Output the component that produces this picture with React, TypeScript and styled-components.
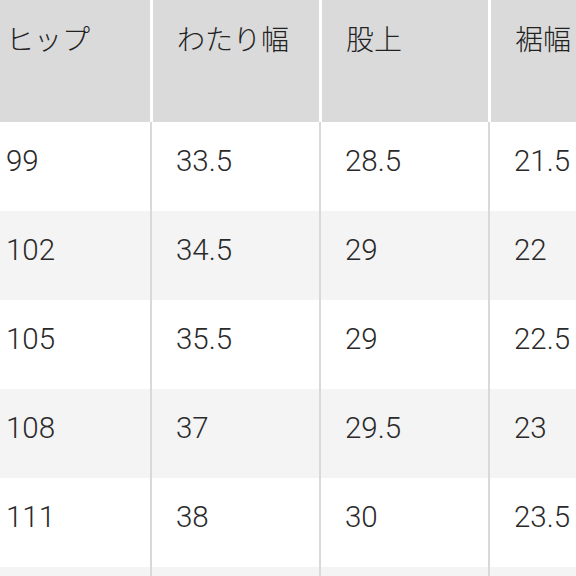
import React from 'react';
import styled, { createGlobalStyle } from 'styled-components';

const GlobalStyle = createGlobalStyle`
  html, body {
    margin: 0;
    padding: 0;
    background: #ffffff;
    overflow: hidden;
  }
  body {
    font-family: "Liberation Sans", Arial, "Noto Sans CJK JP", sans-serif;
    color: #222222;
  }
`;

const Viewport = styled.div`
  width: 576px;
  height: 576px;
  overflow: hidden;
  background: #f4f4f4;
`;

const Table = styled.div`
  margin-left: -17px;
  width: 680px;
  display: flex;
  flex-direction: column;
`;

const Row = styled.div<{ $shade: 'head' | 'white' | 'gray' }>`
  display: grid;
  grid-template-columns: 167px 169px 169px 175px;
  height: ${({ $shade }) => ($shade === 'head' ? '122px' : '89px')};
  background: ${({ $shade }) =>
    $shade === 'head' ? '#dadada' : $shade === 'gray' ? '#f4f4f4' : '#ffffff'};
`;

const Cell = styled.div<{ $head?: boolean; $first?: boolean }>`
  display: flex;
  align-items: ${({ $head }) => ($head ? 'flex-start' : 'center')};
  padding-left: ${({ $first }) => ($first ? '23px' : '24px')};
  padding-top: ${({ $head }) => ($head ? '23px' : '0')};
  padding-bottom: ${({ $head }) => ($head ? '0' : '11px')};
  border-left: ${({ $first, $head }) =>
    $first ? 'none' : $head ? '3px solid #ffffff' : '2px solid #d9d9d9'};
  font-size: ${({ $head }) => ($head ? '28px' : '29.5px')};
  font-family: ${({ $head }) =>
    $head
      ? '"Noto Sans CJK JP", "Noto Sans", sans-serif'
      : 'Roboto, "Liberation Sans", Arial, sans-serif'};
  font-weight: 300;
  color: ${({ $head }) => ($head ? '#222222' : '#2a2a2a')};
  line-height: 1.1;
  white-space: nowrap;
`;

const headers = ['ヒップ', 'わたり幅', '股上', '裾幅'];

const rows = [
  ['99', '33.5', '28.5', '21.5'],
  ['102', '34.5', '29', '22'],
  ['105', '35.5', '29', '22.5'],
  ['108', '37', '29.5', '23'],
  ['111', '38', '30', '23.5'],
  ['', '', '', ''],
];

export default function App() {
  return (
    <Viewport>
      <GlobalStyle />
      <Table>
        <Row $shade="head">
          {headers.map((h, i) => (
            <Cell key={h} $head $first={i === 0}>
              {h}
            </Cell>
          ))}
        </Row>
        {rows.map((r, ri) => (
          <Row key={ri} $shade={ri % 2 === 0 ? 'white' : 'gray'}>
            {r.map((v, ci) => (
              <Cell key={ci} $first={ci === 0}>
                {v}
              </Cell>
            ))}
          </Row>
        ))}
      </Table>
    </Viewport>
  );
}
